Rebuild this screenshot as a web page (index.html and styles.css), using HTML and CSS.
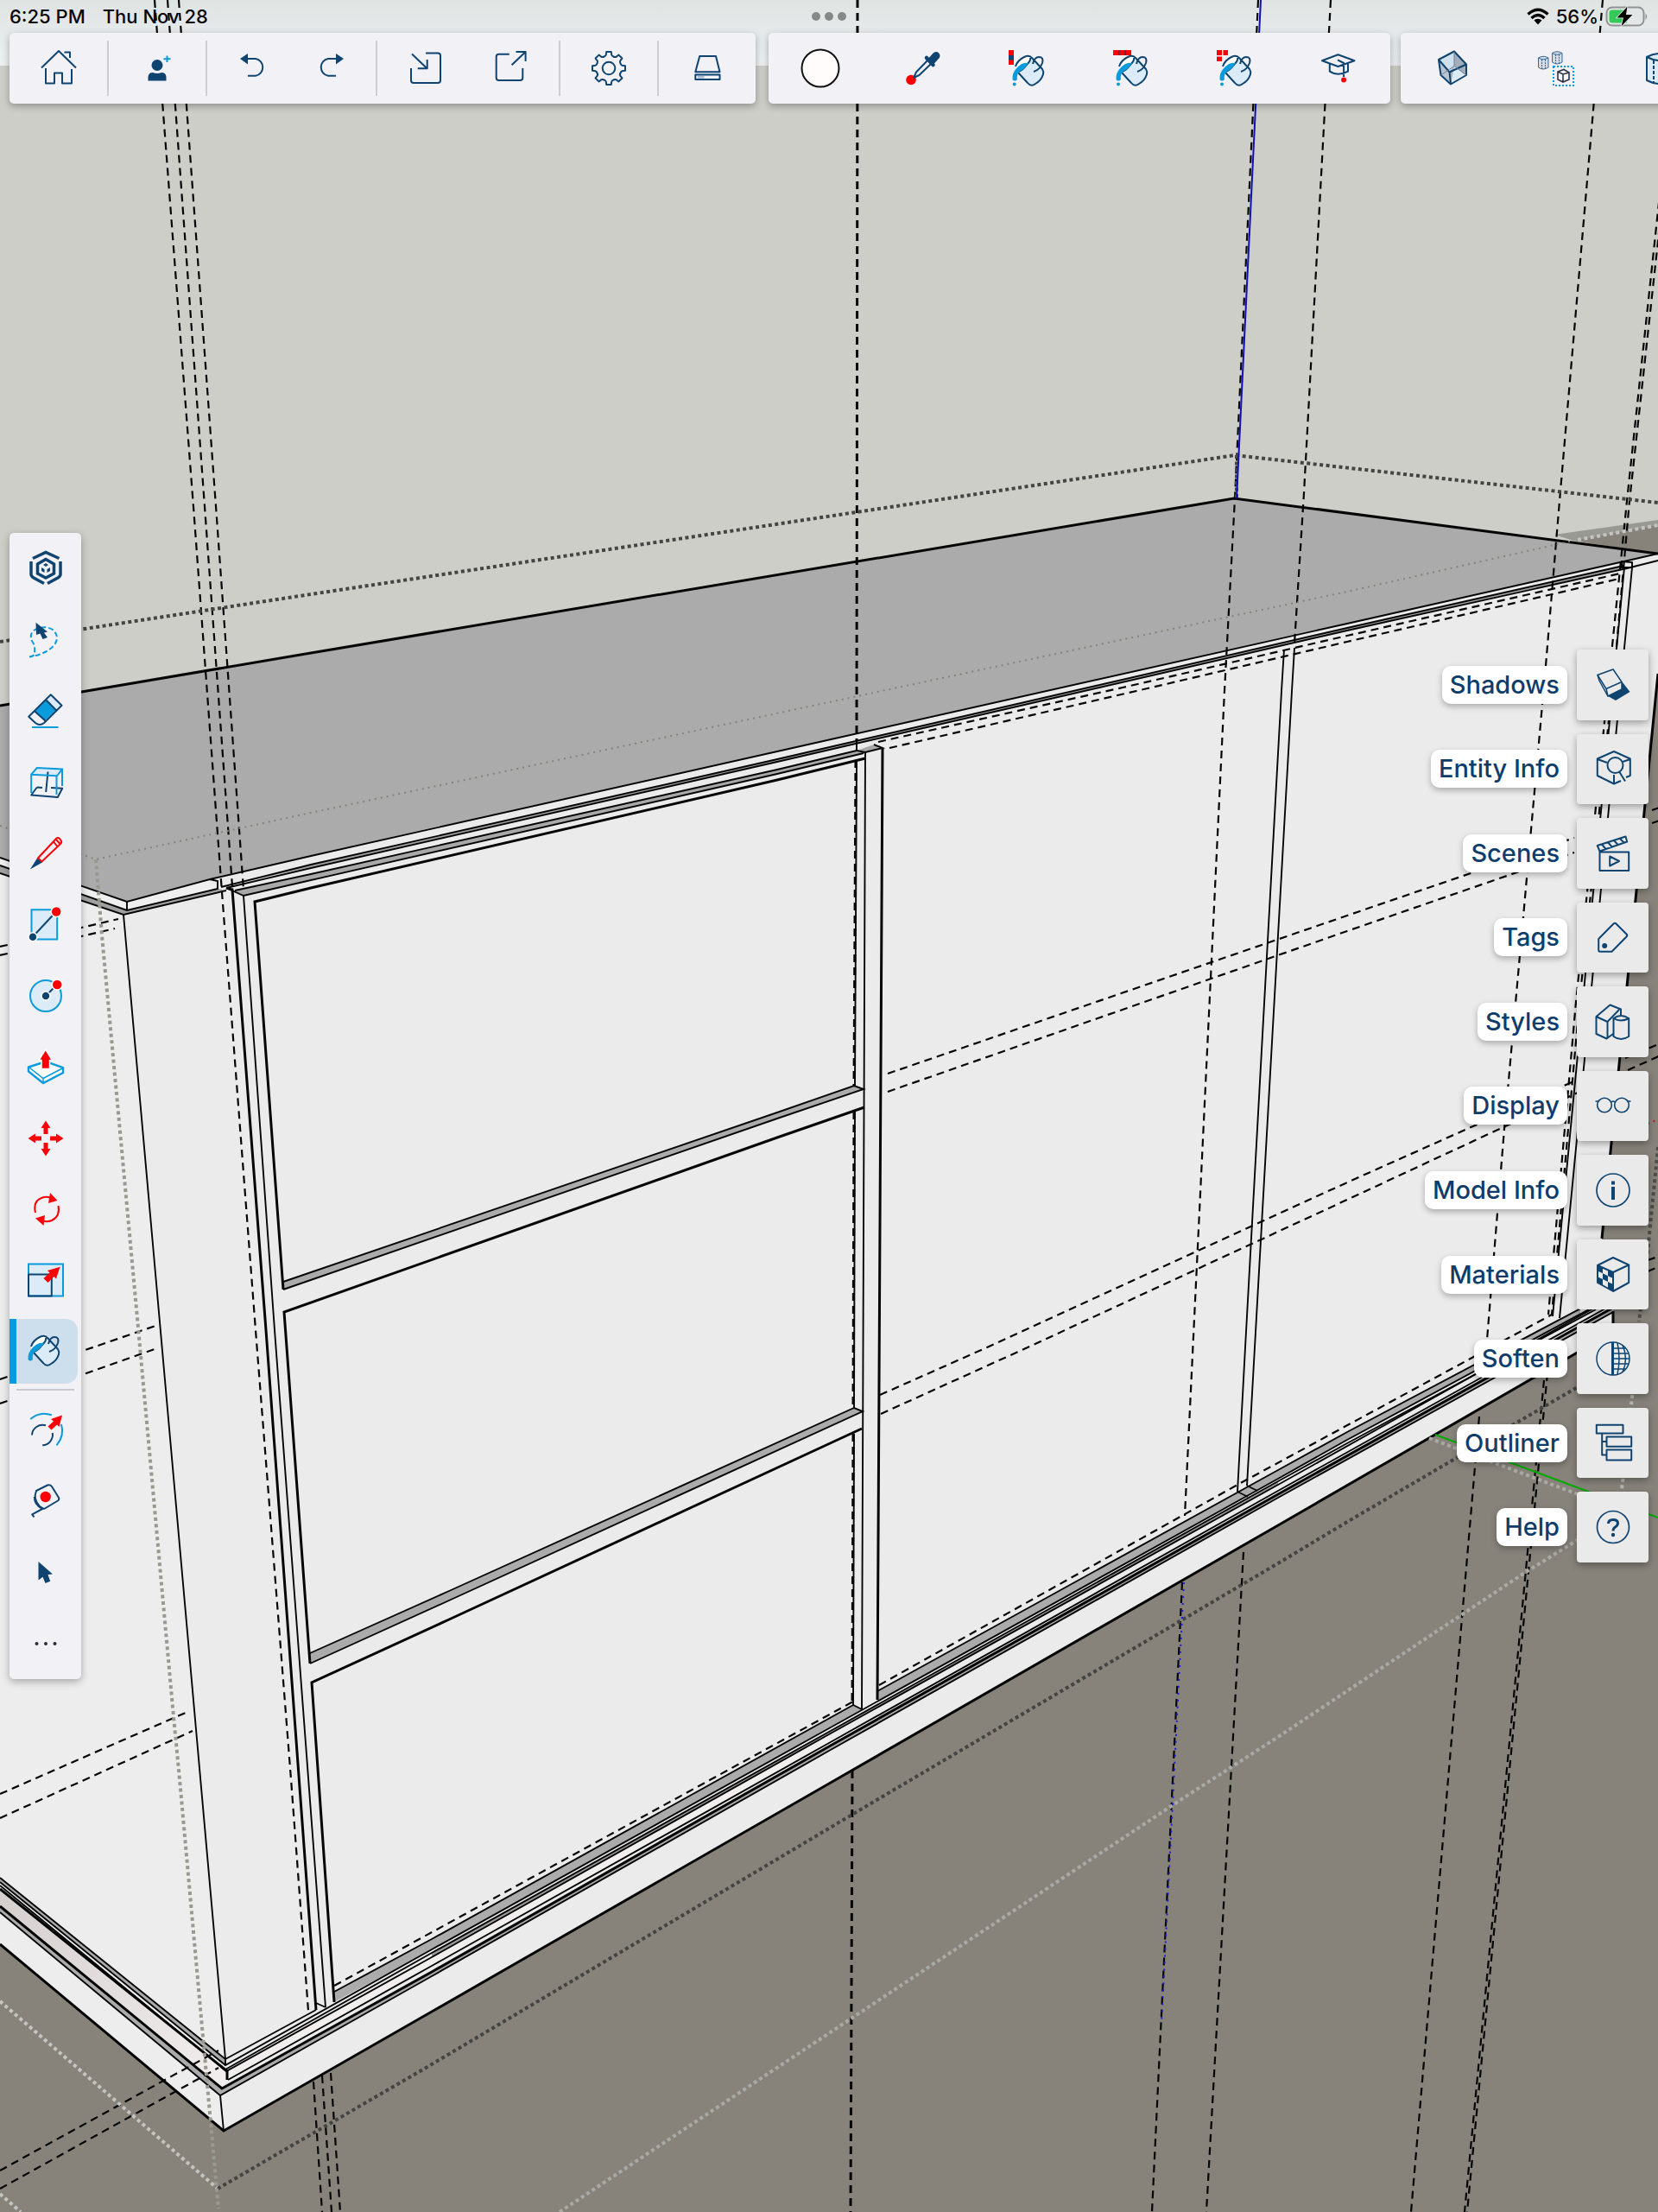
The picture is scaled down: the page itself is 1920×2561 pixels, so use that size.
FILE: index.html
```html
<!DOCTYPE html>
<html lang="en">
<head>
<meta charset="utf-8">
<meta name="viewport" content="width=device-width, initial-scale=1">
<title>Model workspace</title>
<link rel="stylesheet" href="styles.css">
</head>
<body>
<div class="app">

<svg class="viewport" viewBox="0 0 1920 2561" preserveAspectRatio="xMidYMid slice" role="img" aria-label="3D model of a cabinet">
  <defs>
    <linearGradient id="sky" x1="0" y1="0" x2="0" y2="1"><stop offset="0" stop-color="#dfe3e2"/><stop offset="1" stop-color="#ecf0f1"/></linearGradient>
    <linearGradient id="toe" x1="0" y1="0" x2="1" y2="1"><stop offset="0" stop-color="#d4cfcd"/><stop offset="1" stop-color="#f3efee"/></linearGradient>
  </defs>
  <rect width="1920" height="2561" fill="#cdcec8"/>
  <rect width="1920" height="76" fill="url(#sky)"/>
  <!-- cabinet body -->
  <path fill="#ebebeb" d="M143 1046 243 1018 360 991 900 870 1560 722 1885 649 1920 641V785L1855 1434 1868 1518V1542L259 2467z"/>
  <path fill="#ededed" d="M0 993 143 1046 261 2384 259 2467 0 2251z"/>
  <!-- floor -->
  <path fill="#87837b" d="M0 2251 259 2467 1868 1542V1518L1855 1434 1920 780V2561H0z"/>
  <path fill="#999994" d="M1800 619 1920 602V610L1822 626z"/>
  <path fill="#87837b" d="M1822 626 1920 608V641z"/>
  <!-- countertop -->
  <path fill="#ababab" d="M0 817 1429 577 1920 641 1560 722 900 870 360 991 243 1018 147 1044 0 993z"/>
  <path fill="#efefef" d="M0 993 147 1044V1054L0 1002zM147 1044 243 1018 252 1029 147 1054z"/>
  <path fill="#a0a0a0" d="M0 1002 147 1054 143 1059 0 1011zM147 1054 252 1029 262 1031 143 1059zM256 1027 360 1001 900 879 1560 727 1880 655V658L1560 730 900 882 360 1004z"/>
  <path fill="#a8a8a8" d="M270 1032 360 1012 900 891 992 869 1002 872 900 896 360 1018 282 1037zM992 869 1012 862 1022 866 1002 871z"/>
  <!-- drawer shelves and opening floors -->
  <path fill="#ababab" d="M328 1484 900 1288 989 1257 1000 1261 900 1295 328 1493zM359 1914 520 1842 989 1630 999 1634 520 1853 359 1926z"/>
  <path fill="#ababab" d="M387 2306 500 2245 988 1974 998 1979 500 2257 387 2318zM1016 1958 1480 1702 1560 1658 1830 1514V1522L1560 1667 1480 1712 1016 1970z"/>
  <path fill="#ababab" d="M0 2174 261 2384V2391L0 2179z"/>
  <path fill="url(#toe)" d="M0 2187 262 2398 264 2408 257 2418 0 2207z"/>
  <path fill="#f1eeed" d="M263 2398 500 2266 960 2008V2018L500 2276 264 2408 257 2418z"/>
  <path fill="#ababab" d="M0 2207 257 2418 255 2426 0 2214zM257 2418 500 2283 960 2022 1480 1730 1868 1515V1520L1480 1734 960 2027 500 2288 255 2426z"/>
  <path fill="#9a9a9a" d="M500 2261 960 2005 1480 1715V1719L960 2008 500 2266z"/>

  <g class="edge">
    <path d="M0 993 147 1044 243 1018 252 1020V1029L147 1054 0 1002M147 1044V1054M0 1011 143 1059 262 1031"/>
    <path d="M243 1018 360 991 900 870 1560 722 1885 649 1920 641"/>
    <path d="M256 1027 360 1001 900 879 1560 727 1880 655M262 1028 360 1005 900 882 1560 730 1884 658 1920 649M1878 650 1890 651 1890 657 1878 657z"/>
    <path d="M262 1028 282 1037 360 1019 900 896 1000 872M272 1031 360 1012 900 891 992 869M992 857V869L1002 871 1022 866 1012 862"/>
    <path d="M143 1059 261 2384M282 1037 318 1540 377 2324M992 880 990 1257M990 1287 989 1630M989 1660 988 1974M1002 870 998 1979M1499 750 1496 800 1453 1560 1444 1720M1487 752 1484 800 1442 1560 1433 1727"/>
    <path d="M1881 657 1798 1524M1890 657 1806 1526M1433 1727 1445 1733M1444 1720 1456 1726M366 2319 377 2324"/>
    <path d="M328 1484 900 1288 989 1257 1000 1261 900 1295 328 1493M359 1914 520 1842 989 1630 999 1634 520 1853 359 1926"/>
    <path d="M261 2384 366 2327M387 2306 500 2245 988 1974 998 1979M1016 1958 1480 1702 1560 1658 1836 1512"/>
    <path d="M0 2174 261 2384 261 2391M0 2179 261 2391 500 2257 960 2001 1480 1712 1560 1667 1840 1516M261 2396 500 2261 960 2005 1480 1715 1560 1671 1848 1516"/>
    <path d="M0 2183 262 2398 500 2266 960 2008 1480 1719 1868 1502M264 2408 500 2276 960 2018 1480 1726 1868 1510M0 2214 255 2426 500 2288 960 2027 1480 1734 1868 1519M255 2426 259 2467"/>
  </g>
  <g class="edge edge-bold">
    <path d="M0 817 360 756 1429 577 1920 641"/>
    <path d="M0 2251 259 2467 500 2329 960 2065 1480 1766 1868 1542V1518M1920 780 1855 1434"/>
    <path d="M262 1028 269 1030 308 1540 366 2327M328 1493 295 1044 360 1028 900 903 1002 878M359 1926 329 1519 900 1317 1001 1282M387 2318 361 1948 520 1875 998 1654M1022 866 1016 1968"/>
    <path d="M0 2187 263 2398V2408M0 2207 257 2418 500 2283 960 2022 1480 1730 1868 1514"/>
  </g>

  <!-- dashed construction guides -->
  <g class="guide">
    <path d="M179 0 225 600 257 1033 296 1540 337 2060 357 2328M194 0 238 600 269 1026M207 0 251 600 282 1030"/>
    <path d="M363 2410 373 2561M373 2403 384 2561M383 2400 394 2561"/>
    <path d="M1457 0 1430 577 1418 800 1372 1755M1369 1832 1334 2561M1541 0 1510 571 1499 745M1440 1797 1397 2561"/>
    <path d="M1856 0 1806 580 1790 771 1742 1307 1722 1551M1713 1640 1634 2561"/>
    <path d="M1926 188 1884 580 1867 748 1825 1160 1793 1522M1930 188 1887 580 1872 748 1829 1160 1797 1522M1788 1598 1696 2561M1792 1590 1699 2561"/>
    <path d="M1028 1243 1560 1060 1823 970M1028 1264 1560 1078 1823 987M1019 1615 1143 1560 1560 1369 1820 1253M1020 1637 1190 1560 1560 1389 1827 1265"/>
    <path d="M1017 859 1300 796 1560 736 1876 664M1030 866 1316 800 1560 743 1875 670"/>
    <path d="M0 1096 137 1064M0 1106 133 1075M0 1597 180 1535M0 1625 182 1561M0 2077 217 1982M0 2105 223 2004"/>
    <path d="M0 2513 253 2374M0 2534 253 2394M387 2299 988 1970M1018 1951 1433 1719 1797 1522"/>
    <path d="M1913 938 1925 934M1913 953 1925 949M1882 1225 1925 1207M1885 1239 1925 1221M1908 1459 1920 1455M1908 1472 1920 1467"/>
  </g>
  <path class="guide guide-bold" d="M993 0 992 857M987 2050 985 2561M991 880 989 1257M989 1287 988 1630M988 1660 987 1974"/>

  <!-- dotted section bounds -->
  <g class="bound">
    <path stroke="#444542" d="M0 743 360 688 1430 527 1920 582M1432 527V577M252 2534 500 2390 1022 2080 1480 1810 1560 1762 1825 1607 1900 1563"/>
    <path stroke="#999990" d="M111 995 118 1083 160 1537 200 1977 208 2060 253 2557"/>
    <path stroke="#c4c4c1" d="M0 2317 251 2533M0 2540 24 2561M1827 625 1920 608"/>
    <path stroke="#a9a9a5" d="M648 2561 1373 2080 1480 2011 1767 1820 1830 1781M1655 1665 1827 1730"/>
    <path stroke="#4d4d4a" d="M1920 1328 1908 1450 1898 1530"/>
    <path stroke="#b5b5b1" d="M1892 1600 1878 1724"/>
  </g>
  <path class="bound-faint" d="M0 956 111 995 360 941 1560 685 1822 626"/>

  <!-- axes -->
  <path fill="none" stroke="#1010b4" stroke-width="2" d="M1460 0 1432 577"/>
  <path fill="none" stroke="#1a1ae0" stroke-width="2" stroke-dasharray="2 6" d="M1371 1832 1345 2343"/>
  <path fill="none" stroke="#00aa00" stroke-width="2" d="M1662 1661 1920 1757"/>
  <path fill="none" stroke="#c01818" stroke-width="2" stroke-dasharray="2 5" d="M1908 1301 1920 1296"/>
</svg>

<!-- shared icon shapes -->
<svg class="sprite" aria-hidden="true">
  <symbol id="bucket" viewBox="0 0 48 48">
    <path class="tint" d="M11 28Q20 24 26 11Q27 10 29 12L41 25Q44 30 40 35Q35 43 29 44Q26 44 24 42z"/>
    <path class="blank" d="M12 27Q8 24 13 17Q19 9 25 10Q29 12 24 18Q18 25 12 27z"/>
    <path class="ln" d="M13 29 24 41Q28 46 33 42Q40 38 42 31Q43 28 41 25L29 12Q26 8 20 11Q12 15 10 22M27 12Q28 15 23 20Q18 27 13 28M31 28Q38 26 41 18Q43 11 37 11Q32 11 30 19"/>
    <path class="sky" d="M25 18Q18 17 12 23Q6 29 6.500 37Q9 40 12 37Q11 32 14 28Q20 26 25 18z"/>
  </symbol>
</svg>

<header class="top">
  <div class="status">
    <span class="status-side"><span>6:25 PM</span><span>Thu Nov 28</span></span>
    <button class="window-dots" type="button" aria-label="Window options"><i></i><i></i><i></i></button>
    <span class="status-side status-end">
      <svg width="26" height="20" viewBox="0 0 26 20" aria-hidden="true"><path fill="none" stroke="#050505" stroke-width="3.400" d="M1.500 7.500Q13 -3 24.500 7.500M5.500 12Q13 5 20.500 12"/><path fill="#050505" d="M8.500 14.500Q13 11 17.500 14.500L13 19.500z"/></svg>
      <span>56%</span>
      <svg width="50" height="24" viewBox="0 0 50 24" aria-hidden="true"><rect x="1.500" y="1.500" width="43" height="21" rx="6.500" fill="none" stroke="#8f9394" stroke-width="2"/><path fill="#8f9394" d="M46.500 8.500Q50 12 46.500 16z"/><path fill="#34c759" d="M8 4.500H25V19.500H8Q4.500 19.500 4.500 16V8Q4.500 4.500 8 4.500z"/><path fill="#050505" stroke="#eef1f1" stroke-width="1.500" paint-order="stroke" d="M25.500 .5 13.500 13.500H21L18.500 23.500 31.500 10H24z"/></svg>
    </span>
  </div>

  <div class="bars">
    <nav class="bar bar-file" aria-label="File">
      <div class="cell"><button type="button" aria-label="Home"><svg viewBox="0 0 48 48"><path class="ln" d="M4 23.500 24 4 44 23.500M30.500 5.500H37V12M9 24V41.500H19V29.500H28V41.500H39V25"/></svg></button></div>
      <div class="cell"><button type="button" aria-label="Share with people"><svg viewBox="0 0 48 48"><ellipse class="navy" cx="24" cy="20.500" rx="6.500" ry="6.500"/><path class="navy" d="M13.500 38.500V34Q14 29 19 29Q24 31 29 29Q34 29 34.500 34V38.500z"/><path class="ln-sky" d="M35.500 9.500V17M31.500 13.300H39.500"/></svg></button></div>
      <div class="cell cell-pair">
        <button type="button" aria-label="Undo"><svg viewBox="0 0 48 48"><path class="navy" d="M9 13 18 7V19.500z"/><path class="ln" d="M18 13H27A10 10 0 0 1 27 32.700H18"/></svg></button>
        <button type="button" aria-label="Redo"><svg viewBox="0 0 48 48"><path class="navy" d="M39 13 30 7V19.500z"/><path class="ln" d="M30 13H21A10 10 0 0 0 21 32.700H30"/></svg></button>
      </div>
      <div class="cell cell-pair cell-wide">
        <button type="button" aria-label="Import"><svg viewBox="0 0 48 48"><path class="ln" d="M8 7.500 25.500 24.300M25.700 14V24.300H14.700M24 6.500H38Q41 6.500 41 9.500V38Q41 41 38 41H10Q7 41 7 38V24"/></svg></button>
        <button type="button" aria-label="Export"><svg viewBox="0 0 48 48"><path class="ln" d="M24.600 20.300 40.600 5M29.500 5H40.600V16M21.800 7.700H9.700Q6.700 7.700 6.700 10.700V35Q6.700 38 9.700 38H34.300Q37.300 38 37.300 35V24"/></svg></button>
      </div>
      <div class="cell"><button type="button" aria-label="Settings"><svg viewBox="-24 -24 48 48"><path id="t" class="ln" d="M-6 -13.500Q-4 -13.500 -3.200 -15.500L-2.800 -19H2.800L3.200 -15.500Q4 -13.500 6 -13.500"/><use href="#t" transform="rotate(45)"/><use href="#t" transform="rotate(90)"/><use href="#t" transform="rotate(135)"/><use href="#t" transform="rotate(180)"/><use href="#t" transform="rotate(225)"/><use href="#t" transform="rotate(270)"/><use href="#t" transform="rotate(315)"/><circle class="ln" r="7.300"/></svg></button></div>
      <div class="cell"><button type="button" aria-label="Storage"><svg viewBox="0 0 48 48"><path class="ln" d="M15.200 10H34L38.500 28.300H10.300zM10.300 31.500H38.500V37H10.300z"/><path fill="#a9bccd" d="M13 33H20.500V35.500H13z"/></svg></button></div>
    </nav>

    <nav class="bar bar-paint" aria-label="Paint tool">
      <button type="button" aria-label="Current material"><svg viewBox="0 0 48 48"><circle cx="24" cy="24" r="21.500" fill="#fffcfb" stroke="#111" stroke-width="2"/></svg></button>
      <button type="button" aria-label="Sample"><svg viewBox="0 0 48 48"><circle class="red" cx="9" cy="37.500" r="5.800"/><path class="ln" d="M12 35 15 28.500 29 14M12 35 18.500 32 33 18"/><path fill="none" stroke="#0f4471" stroke-width="9" stroke-linecap="round" d="M33.500 14.500 38 9.500"/><path fill="none" stroke="#0f4471" stroke-width="4.500" stroke-linecap="round" d="M27 12 34.500 20"/></svg></button>
      <button type="button" aria-label="Paint"><svg viewBox="0 0 48 48"><use href="#bucket"/><path class="red" d="M2 3H8V20H2z"/><path class="navy" d="M2 9H8V14.500H2z"/><circle class="sky" cx="8.700" cy="42.500" r="2"/></svg></button>
      <button type="button" aria-label="Paint connected"><svg viewBox="0 0 48 48"><use href="#bucket"/><path class="red" d="M3 3H24V9H3z"/><path class="navy" d="M9 3H10.500V9H9zM16.500 3H18V9H16.500z"/><circle class="sky" cx="9" cy="42.500" r="2"/></svg></button>
      <button type="button" aria-label="Paint matching"><svg viewBox="0 0 48 48"><use href="#bucket"/><path class="red" d="M3 3H9V9H3zM10.500 3H16V9H10.500zM3 10.500H9V16H3z"/><circle class="sky" cx="9" cy="42.500" r="2"/></svg></button>
      <button type="button" aria-label="Learn"><svg viewBox="0 0 48 48"><path class="ln" d="M5 15.300 23.500 8.300 42.500 15.300 23.500 22zM13.800 19V27.700Q23 34 35 27.700V19M23 14.300 30.100 18V34"/><circle class="red" cx="30.100" cy="37.500" r="3"/></svg></button>
    </nav>

    <nav class="bar bar-solid" aria-label="Solid tools">
      <button type="button" aria-label="X-ray"><svg viewBox="0 0 48 48"><path fill="#cfe1ee" d="M8 14 26 4.500 40 19.500 20.500 28.500z"/><path fill="#a2aebb" d="M26 4.500 40 19.500V32L22 42.500 20.500 28.500 26 21z"/><path fill="#b9c5d0" d="M8 14 20.500 28.500 22 42.500 10.500 32z"/><path fill="#dceaf5" d="M22 42.500 26 21.500 40 32z"/><path class="ln" d="M8 14 26 4.500 40 19.500V32L22 42.500 10.500 32zM8 14 20.500 28.500 40 19.500M20.500 28.500 22 42.500"/><path fill="none" stroke="#6c7f92" d="M26 5V21.500L40 32M26 21.500 10.500 32"/></svg></button>
      <button type="button" aria-label="Group"><svg viewBox="0 0 48 48"><g class="thin" fill="#cfdbe8"><path d="M3.500 12Q9 8.500 15 12V23Q9 27 3.500 23zM19.500 6.500Q25 3 31 6.500V17Q25 21 19.500 17z"/><path fill="none" d="M3.500 12Q9 15.500 15 12M19.500 6.500Q25 10 31 6.500"/><path fill="none" stroke-dasharray="2 1" d="M7.500 14V25M11.500 14V25M23.500 8V19M27.500 8V19"/></g><path fill="none" stroke="#0a9bdc" stroke-width="2" stroke-dasharray="2 2" d="M21 22H44V44H21z"/><path fill="#f7f7fa" stroke="#333347" stroke-width="1.600" d="M26 28 33 25.500 39 29V37L32 40 26 37zM26 28 32 31 39 29M32 31V40"/></svg></button>
      <button type="button" aria-label="Cylinder"><svg viewBox="0 0 48 48"><path class="tint" d="M9 11V38Q24 46 39 38V11Q24 3 9 11z"/><path class="ln" d="M9 11V38Q24 46 39 38V11Q24 3 9 11Q24 19 39 11"/><path class="ln" stroke-dasharray="4 2" d="M17 15V41"/></svg></button>
    </nav>
  </div>
</header>

<nav class="tools" aria-label="Tools">
  <div class="tool-set">
    <button type="button" aria-label="Tool search"><svg viewBox="0 0 48 48"><path fill="none" stroke="#0f4471" stroke-width="3.500" d="M9 12.500 24 5.500 39.500 12.500M7 16V31Q7 33 10 35L22 41.500M41 16V31Q41 33 38 35L26 41.500M24 13.500 33.500 19V30L24 35 14.500 30V19z"/><path class="navy" d="M24 18 27 20 24 22 21 20zM19 23 22.500 25V29L19 27zM29 23 25.500 25V29L29 27z"/></svg></button>
    <button type="button" aria-label="Lasso select"><svg viewBox="0 0 48 48"><path fill="none" stroke="#0a9bdc" stroke-width="2" stroke-dasharray="6 3" d="M5 43.500C13 43 11 37 11 30Q3 19 10 13Q22 6 32 12Q40 19 35 28Q27 40 5 43.500"/><path class="navy" d="M12.500 3.700 26 14.500 22 15.500 26 21 20.500 23 17.500 16.500 13 18z"/></svg></button>
    <button type="button" aria-label="Eraser"><svg viewBox="0 0 48 48"><path class="tint" d="M24.200 11.300 29.800 5.300 42.500 17.700 36 23z"/><path class="sky" d="M24.200 11.300 35.800 23 23.200 35.300 11.500 24.700z"/><path class="ln" d="M29.800 5.300 42.500 17.700 22 38Q17 42 12 38L4.200 30.700zM24.200 11.300 35.800 23M11.500 24.700 23.200 35.300"/><path class="ln-sky" d="M8 43H38.500"/></svg></button>
    <button type="button" aria-label="Section box"><svg viewBox="0 0 48 48"><path class="tint" d="M13.800 8 43 9.500 37 17.300 7.200 15.700z"/><path class="ln" d="M13.800 30.500 7.200 39.500 37.800 42 43.200 31.700 30 31M13.800 30.500 20 31M26.500 12.500 24.200 36"/><path class="ln-sky" d="M7.200 37V15.700L13.800 8 43 9.500V29M7.200 15.700 37 17.300 43 9.500M36.500 17.300V39"/></svg></button>
    <button type="button" aria-label="Pencil"><svg viewBox="0 0 48 48"><path class="navy" d="M5.800 42.500 14.200 29.500 20 34.500z"/><path class="ln-red" d="M15 29.500 36 7Q38 5 40 7L41.500 9Q43 11 41 13L19.500 33.500zM33 10.500 37 15.500M36 8 40 12.500"/></svg></button>
    <button type="button" aria-label="Rectangle"><svg viewBox="0 0 48 48"><path class="tint" d="M7.500 7.300H37.200V41.500H7.500z"/><path class="ln-sky" d="M7.500 7.300H37.200V41.500H7.500z"/><path class="ln" d="M9 38.500 36 9.500"/><circle class="navy ring" cx="9" cy="38.700" r="5"/><circle class="red ring" cx="36.200" cy="9.500" r="6"/></svg></button>
    <button type="button" aria-label="Circle"><svg viewBox="0 0 48 48"><circle class="tint" cx="24" cy="24" r="18"/><circle class="ln-sky" cx="24" cy="24" r="18"/><path class="ln" d="M24 24 36 12"/><circle class="navy ring" cx="24" cy="24" r="5"/><circle class="red ring" cx="37.200" cy="11" r="6"/></svg></button>
    <button type="button" aria-label="Push pull"><svg viewBox="0 0 48 48"><path fill="#fff" stroke="#0a9bdc" stroke-width="2.400" d="M4 24.500 24 18 44 25V31L21 43 4 29.500z"/><path fill="none" stroke="#0a9bdc" stroke-width="1.500" d="M5 25 21 37.500 43 26M21 37.500V42"/><path class="red ring" d="M23.700 4 31.500 16.500H28.500V26.500H19V16.500H16z"/></svg></button>
    <button type="button" aria-label="Move"><svg viewBox="0 0 48 48"><path class="red" d="M24 3.500 29.500 12H26.500V19H21.500V12H18.500zM24 44.500 29.500 36H26.500V29H21.500V36H18.500zM3.500 24 12 18.500V21.500H19V26.500H12V29.500zM44.500 24 36 18.500V21.500H29V26.500H36V29.500z"/></svg></button>
    <button type="button" aria-label="Rotate"><svg viewBox="0 0 48 48"><path class="ln-red" d="M12 28Q9 15 19 11Q24 9 29 10.500M38.500 20Q41 32 31 37Q26 39 21 37.500"/><path class="red" d="M29 5 37.500 14 27 17zM21.500 43 12 34.500 23 31z"/></svg></button>
    <button type="button" aria-label="Scale"><svg viewBox="0 0 48 48"><path class="tint" d="M4 5.500H44V42.500H4z"/><path class="ln-sky" d="M4 5.500H44V42.500H4z"/><path class="ln" d="M4 17.500H30.800V42.500H4z"/><path class="red" d="M40.500 8.700 36 22.500 33.500 20 26.500 27 21.500 22 28.500 15.500 26 13z"/></svg></button>
    <button type="button" class="is-active" aria-label="Paint" aria-pressed="true"><svg viewBox="3 4 48 48"><use href="#bucket" width="48" height="48"/></svg></button>
  </div>
  <hr>
  <div class="tool-set tool-recent">
    <button type="button" aria-label="Offset"><svg viewBox="0 0 48 48"><path class="ln-sky" d="M6.200 13Q17 3.500 30.800 8.300M42 19Q46 32 36.500 43.300"/><path class="ln" d="M8 31.500A12.300 12.300 0 0 1 24 20.300M31.800 29A12.300 12.300 0 0 1 20.200 43.300"/><path class="red" d="M43 8.500 39.500 22 37 19.500 30.500 25.500 26.500 21.500 33 15.500 30 13z"/></svg></button>
    <button type="button" aria-label="Tape measure"><svg viewBox="0 0 48 48"><path class="ln" d="M13 13 26 6.500Q29 5.500 31 8L39 21Q40 23 38 24.500L22 34 17 31Q9 23 13 13zM11 20Q10 28 20 34L8.200 40.300 10.500 43.500"/><circle class="red" cx="23.700" cy="20" r="6.200"/></svg></button>
    <button type="button" aria-label="Select"><svg viewBox="0 0 48 48"><path class="navy" d="M15.500 12 32 26.500 26.500 27 29.200 34.700 23.500 37 20.500 29.700 15.500 33.500z"/></svg></button>
    <button type="button" aria-label="More tools"><svg viewBox="0 0 48 48"><g fill="#2b2b3a"><circle cx="13.500" cy="24" r="2"/><circle cx="24" cy="24" r="2"/><circle cx="34.500" cy="24" r="2"/></g></svg></button>
  </div>
</nav>

<div class="panels" role="group" aria-label="Panels">
  <button type="button"><span class="tag">Shadows</span><span class="tile"><svg viewBox="0 0 48 48"><path class="navy" d="M35 21 43.500 32 27 42 18 37z"/><path fill="#eaeaea" stroke="#0f4471" stroke-width="1.500" d="M6 12.500 24 6 34 20.500V29L18 37 8 19z"/><path fill="none" stroke="#0f4471" stroke-width="1.500" d="M6 12.500 16 28.500 34 20.500M16 28.500 18 37"/></svg></span></button>
  <button type="button"><span class="tag">Entity Info</span><span class="tile"><svg viewBox="0 0 48 48"><path class="ln" d="M33 38 25 41.500 5.800 32V12.500L25 4 43.800 12.500V32L39 34M6 13 17 17M44 13 35 16M25 41V31"/><circle class="ln" cx="26.500" cy="20" r="9"/><path class="ln" d="M31.500 28 38 38.500"/></svg></span></button>
  <button type="button"><span class="tag">Scenes</span><span class="tile"><svg viewBox="0 0 48 48"><path class="ln" d="M8.500 22.400H42.200V43.900H8.500zM5.800 15 38.500 4.500 40.200 10.500 8.500 21.500zM20.200 27.500 31 33 20.200 38.500zM11 13.500 15.500 19M18 11 22.500 16.500M25 9 29.500 14M32 7 36.500 11.500"/></svg></span></button>
  <button type="button"><span class="tag">Tags</span><span class="tile"><svg viewBox="0 0 48 48"><path class="ln" d="M24.500 8.500Q26 7 27.500 8.500L39.500 20.500Q41 22 39.500 23.500L22.500 40.800H9Q7.200 40.800 7.200 39V26z"/><circle class="navy" cx="14.200" cy="34" r="3"/></svg></span></button>
  <button type="button"><span class="tag">Styles</span><span class="tile"><svg viewBox="0 0 48 48"><path class="ln" d="M4.500 18 20.500 4.500 33 9.500V16M17.500 24 4.500 18V38L16.500 43.500 24 38M17.500 24V43M17.500 24 31 10M24.500 20V41Q33 47 42.200 41V20Q33 14 24.500 20Q33 25 42.200 20"/></svg></span></button>
  <button type="button"><span class="tag">Display</span><span class="tile"><svg viewBox="0 0 48 48"><g fill="none" stroke="#0f4471" stroke-width="1.600"><circle cx="14" cy="23.500" r="8.300"/><circle cx="34" cy="23.500" r="8.300"/><path d="M22 20Q24 18 26 20M3.500 19H7.500M40.500 19H44.500"/></g></svg></span></button>
  <button type="button"><span class="tag">Model Info</span><span class="tile"><svg viewBox="0 0 48 48"><circle cx="24" cy="24" r="19" fill="none" stroke="#0f4471" stroke-width="1.700"/><path class="navy" d="M22 13.500H26V17.500H22zM22 20H26V35H22z"/></svg></span></button>
  <button type="button"><span class="tag">Materials</span><span class="tile"><svg viewBox="0 0 48 48"><path class="ln" d="M24 4 42.200 12.500V33L24 43 6 33V13zM6 13 24 21 42.200 12.500M24 21V43"/><path class="navy" d="M6 13 12 15.700V22.300L6 19.500zM12 22.300 18 25.200V32L12 29zM18 18.400 24 21V28L18 25.200zM6 26.300 12 29V36L6 33zM18 32 24 35V43L18 39.500z"/></svg></span></button>
  <button type="button"><span class="tag">Soften</span><span class="tile"><svg viewBox="0 0 48 48"><circle cx="24" cy="24" r="19" fill="none" stroke="#0f4471" stroke-width="1.500"/><path fill="none" stroke="#0f4471" stroke-width="3" d="M23.500 5V43"/><path fill="none" stroke="#0f4471" stroke-width="1.500" d="M24 12H38.500M24 18H42M24 24H43M24 30H42M24 36H38.500M29 6Q33 24 29 42M35 8.500Q42 24 35 39.500"/></svg></span></button>
  <button type="button"><span class="tag">Outliner</span><span class="tile"><svg viewBox="0 0 48 48"><path class="ln" d="M4.800 2.800H35.500V12.600H4.800zM16.500 16.500H45.200V27.700H16.500zM16.500 31.500H45.200V43.400H16.500zM11.200 12.600V37.500H16.500M11.200 22H16.500"/></svg></span></button>
  <button type="button"><span class="tag">Help</span><span class="tile"><svg viewBox="0 0 48 48"><circle cx="24" cy="24" r="18.500" fill="none" stroke="#0f4471" stroke-width="1.700"/><path fill="none" stroke="#0f4471" stroke-width="3" d="M18.500 20Q18.500 15.500 24 15.500Q29.500 15.500 29.500 19.500Q29.500 22 26.500 24Q24 25.500 24 28.500"/><circle class="navy" cx="24" cy="33" r="2.200"/></svg></span></button>
</div>

</div>
</body>
</html>
```
FILE: styles.css
```css
* { box-sizing: border-box; }

body {
  margin: 0;
  background: #cdcec8;
  color: #050505;
  font-family: Inter, "Liberation Sans", sans-serif;
}

button {
  margin: 0;
  padding: 0;
  border: 0;
  background: none;
  font: inherit;
  color: inherit;
  cursor: pointer;
}

/* The drawing, header and both rails share one grid cell, stacked. */
.app {
  position: relative;
  display: grid;
  grid-template-columns: minmax(0, 1fr);
  min-height: 100vh;
  overflow: hidden;
}

.app > * { grid-area: 1 / 1; }

.viewport {
  position: absolute;
  inset: 0;
  width: 100%;
  height: 100%;
}

.sprite {
  position: absolute;
  width: 0;
  height: 0;
}

/* Model line work */
.edge { fill: none; stroke: #050505; stroke-width: 1.9; }
.edge-bold { stroke-width: 3; }
.guide { fill: none; stroke: #050505; stroke-width: 2.2; stroke-dasharray: 9 6; }
.guide-bold { stroke-width: 3; }
.bound { fill: none; stroke-width: 4; stroke-dasharray: 4 3.5; }
.bound-faint { fill: none; stroke: #85847b; stroke-width: 2; stroke-dasharray: 2 5; }

/* Icon paint */
.ln { fill: none; stroke: #0f4471; stroke-width: 2; stroke-linejoin: round; }
.ln-sky { fill: none; stroke: #0a9bdc; stroke-width: 2; }
.ln-red { fill: none; stroke: #fb0007; stroke-width: 2; }
.navy { fill: #0f4471; }
.sky { fill: #0a9bdc; }
.red { fill: #fb0007; }
.tint { fill: #dcebf8; }
.blank { fill: #fff; }
.ring { stroke: #fff; stroke-width: 1.5; }
.thin { stroke: #3f6890; stroke-width: 1; }

/* Header */
.top {
  position: relative;
  align-self: start;
}

.status {
  display: grid;
  grid-template-columns: 1fr auto 1fr;
  align-items: center;
  height: 38px;
  padding: 0 11px;
  font-size: 22px;
  font-weight: 500;
  line-height: 36px;
}

.status-side {
  display: flex;
  align-items: center;
  gap: 20px;
}

.status-end {
  justify-content: flex-end;
  gap: 8px;
}

.window-dots {
  display: flex;
  gap: 5px;
}

.window-dots i {
  width: 10px;
  height: 10px;
  border-radius: 50%;
  background: #858a89;
}

.bars { display: flex; padding-left: 11px; }

.bar {
  display: flex;
  flex: none;
  height: 82px;
  border-radius: 5px;
  background: #f1f1f6;
  box-shadow: 0 3px 8px rgba(0, 0, 0, .3);
}

.bar svg, .tools svg, .tile svg {
  display: block;
  width: 48px;
  height: 48px;
}

.bar button {
  display: grid;
  place-items: center;
}

.bar-file { margin-right: 15px; align-items: center; }
.bar-paint { margin-right: 12px; }
.bar-paint button, .bar-solid button { width: 120px; }

.cell {
  display: flex;
  justify-content: center;
  align-items: center;
  width: 113px;
  height: 64px;
}

.cell + .cell { width: 114px; border-left: 2px solid #cdcdd2; }
.cell + .cell-pair { width: 197px; gap: 42px; }
.cell + .cell-wide { width: 212px; gap: 51px; }

/* Left rail */
.tools {
  position: relative;
  align-self: center;
  justify-self: start;
  width: 83px;
  margin-left: 11px;
  border-radius: 5px;
  background: #f1f1f6;
  box-shadow: 0 3px 10px rgba(0, 0, 0, .3);
}

.tool-set {
  display: grid;
  grid-auto-rows: 1fr;
  height: 989px;
}

.tool-recent { height: 332px; }

.tools button {
  display: grid;
  place-items: center;
}

.tools .is-active {
  width: 79px;
  height: 75px;
  align-self: center;
  padding-right: 4px;
  border-left: 8px solid #0a9bdc;
  border-radius: 0 14px 14px 0;
  background: #cddfec;
}

.tools hr {
  height: 2px;
  margin: 2px 8px;
  border: 0;
  background: #c8c8cd;
}

/* Right rail */
.panels {
  position: relative;
  display: grid;
  grid-auto-rows: 1fr;
  gap: 16px;
  align-self: center;
  justify-self: end;
  height: 1057px;
  margin-right: 11px;
}

.panels button {
  display: flex;
  align-items: center;
  justify-content: flex-end;
  gap: 11px;
}

.tag {
  padding: 0 9px;
  border-radius: 10px;
  background: #fff;
  box-shadow: 0 3px 7px rgba(0, 0, 0, .28);
  color: #0f3d6b;
  font-size: 29px;
  font-weight: 500;
  line-height: 44px;
}

.tile {
  display: grid;
  place-items: center;
  width: 83px;
  height: 100%;
  border-radius: 4px;
  background: #eaeaea;
  box-shadow: 0 3px 8px rgba(0, 0, 0, .35);
}
```
